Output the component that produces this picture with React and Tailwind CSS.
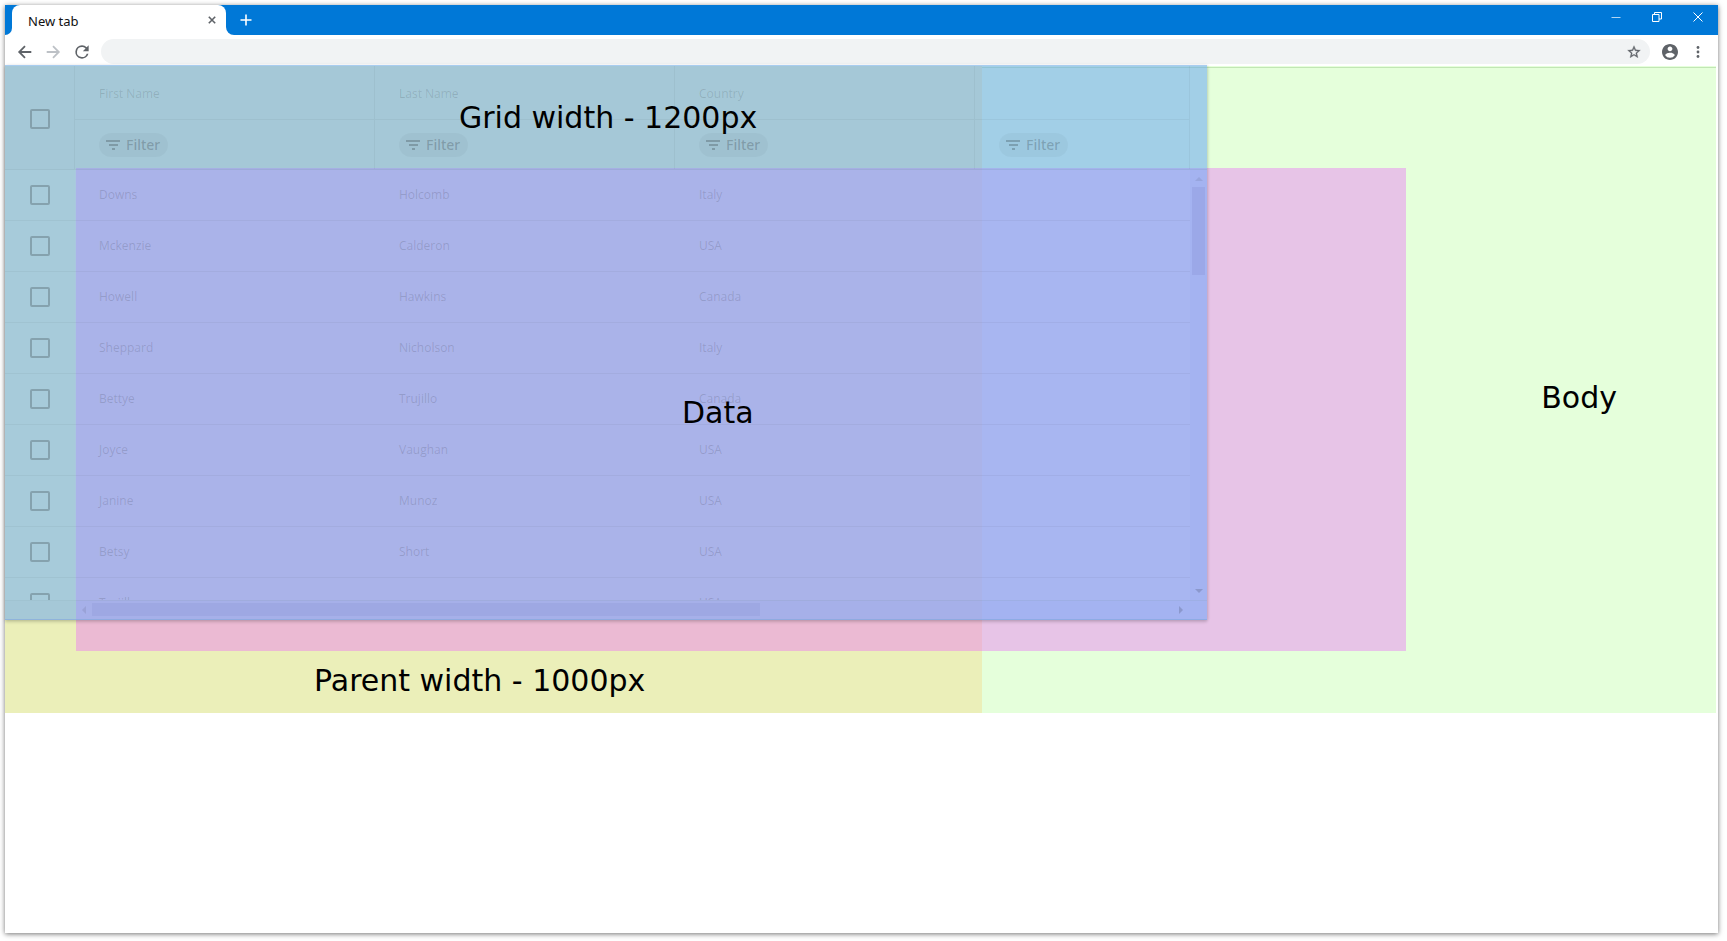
import React from "react";

const columns = ["First Name", "Last Name", "Country", ""];

const people = [
  ["Downs", "Holcomb", "Italy"],
  ["Mckenzie", "Calderon", "USA"],
  ["Howell", "Hawkins", "Canada"],
  ["Sheppard", "Nicholson", "Italy"],
  ["Bettye", "Trujillo", "Canada"],
  ["Joyce", "Vaughan", "USA"],
  ["Janine", "Munoz", "USA"],
  ["Betsy", "Short", "USA"],
  ["Trujillo", "", "USA"],
];

function IconButton({ label, className = "", children }) {
  return (
    <button type="button" aria-label={label} className={`flex items-center justify-center ${className}`}>
      {children}
    </button>
  );
}

function TitleBar() {
  return (
    <div className="flex h-[30px] items-stretch bg-[#0078d7]">
      <div className="w-[7px] bg-white">
        <div className="h-full rounded-br-lg bg-[#0078d7]" />
      </div>
      <div className="flex w-[214px] items-center justify-between bg-[#0078d7]">
        <div className="flex h-full w-full items-center justify-between rounded-t-lg bg-white pl-4 pr-[6px]">
          <span className="pt-[2px] font-['Noto_Sans'] text-[13px] leading-4 text-[#111]">New tab</span>
          <IconButton label="Close tab" className="size-4 text-[#5f6368]">
            <svg width="8" height="8" viewBox="0 0 8 8" stroke="currentColor" strokeWidth="1.6">
              <path d="M.8.8l6.4 6.4M7.200.8L.8 7.200" />
            </svg>
          </IconButton>
        </div>
      </div>
      <div className="flex flex-1 items-stretch bg-white">
        <div className="flex flex-1 items-center rounded-bl-lg bg-[#0078d7]">
          <IconButton label="New tab" className="ml-3 size-4 text-white">
            <svg width="12" height="12" viewBox="0 0 12 12" stroke="currentColor" strokeWidth="1.6">
              <path d="M6 .5v11M.5 6h11" />
            </svg>
          </IconButton>
          <div className="mb-[6px] ml-auto flex items-center gap-[25px] pr-3 text-white">
            <IconButton label="Minimize" className="size-4">
              <svg width="10" height="10" viewBox="0 0 10 10" stroke="currentColor" fill="none" opacity=".7">
                <path d="M.5 5.500h9" />
              </svg>
            </IconButton>
            <IconButton label="Restore" className="size-4">
              <svg width="10" height="10" viewBox="0 0 10 10" stroke="currentColor" fill="none">
                <path d="M.5 2.500h6.500v7H.5zM2.500 2.500v-2h7v6.500h-2.500" />
              </svg>
            </IconButton>
            <IconButton label="Close" className="size-4">
              <svg width="10" height="10" viewBox="0 0 10 10" stroke="currentColor" fill="none">
                <path d="M.5.5l9 9M9.500.5l-9 9" />
              </svg>
            </IconButton>
          </div>
        </div>
      </div>
    </div>
  );
}

function ToolBar() {
  return (
    <div className="flex h-[31px] items-center bg-white pl-3 pr-3 pt-[2px]">
      <IconButton label="Back" className="size-4 text-[#5f6368]">
        <svg width="16" height="16" viewBox="0 0 16 16" stroke="currentColor" strokeWidth="1.8" fill="none">
          <path d="M14.300 8H2.500M8 2.200L2.200 8 8 13.800" />
        </svg>
      </IconButton>
      <IconButton label="Forward" className="ml-3 size-4 text-[#bdc1c6]">
        <svg width="16" height="16" viewBox="0 0 16 16" stroke="currentColor" strokeWidth="1.8" fill="none">
          <path d="M1.700 8h11.800M8 2.200L13.800 8 8 13.800" />
        </svg>
      </IconButton>
      <IconButton label="Reload" className="ml-[11px] size-5 text-[#5f6368]">
        <svg width="20" height="20" viewBox="0 0 24 24" fill="currentColor">
          <path d="M17.650 6.350A7.960 7.960 0 0 0 12 4a8 8 0 1 0 7.730 10h-2.080A6 6 0 1 1 12 6c1.660 0 3.140.69 4.220 1.780L13 11h7V4l-2.350 2.350z" />
        </svg>
      </IconButton>
      <div className="ml-[9px] flex h-[25px] flex-1 items-center rounded-full bg-[#f1f3f4] pr-2">
        <input type="text" aria-label="Address" className="h-full min-w-0 flex-1 bg-transparent px-4 text-sm outline-none" />
        <IconButton label="Bookmark this tab" className="size-4 text-[#5f6368]">
          <svg width="14" height="14" viewBox="1 1 22 22" fill="currentColor" stroke="currentColor" strokeWidth=".5">
            <path d="M22 9.240l-7.190-.62L12 2 9.190 8.630 2 9.240l5.460 4.730L5.820 21 12 17.270 18.180 21l-1.630-7.030L22 9.240zM12 15.400l-3.760 2.270 1-4.280-3.320-2.880 4.380-.38L12 6.100l1.710 4.040 4.380.38-3.320 2.880 1 4.280L12 15.400z" />
          </svg>
        </IconButton>
      </div>
      <IconButton label="Profile" className="ml-3 size-4 text-[#5f6368]">
        <svg width="16" height="16" viewBox="2 2 20 20" fill="currentColor">
          <path d="M12 2C6.480 2 2 6.480 2 12s4.480 10 10 10 10-4.480 10-10S17.520 2 12 2zm0 3c1.660 0 3 1.340 3 3s-1.340 3-3 3-3-1.340-3-3 1.340-3 3-3zm0 14.200a7.200 7.200 0 0 1-6-3.220c.03-1.990 4-3.080 6-3.080 1.990 0 5.970 1.090 6 3.080a7.200 7.200 0 0 1-6 3.220z" />
        </svg>
      </IconButton>
      <IconButton label="Menu" className="ml-3 size-4 text-[#5f6368]">
        <svg width="16" height="16" viewBox="0 0 16 16" fill="currentColor">
          <circle cx="8" cy="3.500" r="1.400" />
          <circle cx="8" cy="8" r="1.400" />
          <circle cx="8" cy="12.500" r="1.400" />
        </svg>
      </IconButton>
    </div>
  );
}

function Tick({ label }) {
  return (
    <input
      type="checkbox"
      aria-label={label}
      className="mx-auto block size-5 appearance-none rounded-[2px] border-2 border-black/20"
    />
  );
}

function FilterChip() {
  return (
    <button
      type="button"
      className="flex h-6 items-center gap-[6px] rounded-full bg-black/3 pl-[7px] pr-2 font-['Noto_Sans'] text-sm font-medium leading-4 text-black/20"
    >
      <svg width="14" height="10" viewBox="0 0 14 10" fill="currentColor">
        <path d="M0 0h14v2H0zM3 4h9v2H3zM6 8h3v2H6z" />
      </svg>
      Filter
    </button>
  );
}

function Arrow({ points, className }) {
  return (
    <svg width="8" height="8" viewBox="0 0 8 8" fill="currentColor" className={className}>
      <polygon points={points} />
    </svg>
  );
}

function DataGrid() {
  return (
    <div className="absolute left-0 right-[509px] top-[-1px] border-b border-[#7fa3dc]/60 bg-[rgb(111,173,246)]/55 shadow-[0_2px_3px_rgba(0,0,0,0.16),1px_0_3px_rgba(0,0,0,0.1)]">
      <div className="flex h-[535px] overflow-hidden border-t border-[#a9cdf0]">
        <div className="flex-1">
          <table className="w-full table-fixed border-separate border-spacing-0 font-['Open_Sans'] text-xs leading-4">
            <colgroup>
              <col className="w-[70px]" />
              <col className="w-[300px]" />
              <col className="w-[300px]" />
              <col className="w-[300px]" />
              <col />
            </colgroup>
            <thead className="bg-black/1">
              <tr className="h-[54px]">
                <th rowSpan={2} className="border-b border-r border-black/4 p-0 pt-[2px]">
                  <Tick label="Select all rows" />
                </th>
                {columns.map((name, i) => (
                  <th key={i} scope="col" className="border-b border-r border-black/4 py-0 pl-6 pt-[3px] text-left font-normal text-black/12">
                    {name}
                  </th>
                ))}
              </tr>
              <tr className="h-[50px]">
                {columns.map((name, i) => (
                  <td key={i} className="border-b border-r border-black/4 py-0 pl-6">
                    <FilterChip />
                  </td>
                ))}
              </tr>
            </thead>
            <tbody>
              {people.map((row, r) => (
                <tr key={r} className="h-[51px]">
                  <td className="border-b border-black/4 p-0">
                    <Tick label={`Select ${row[0]}`} />
                  </td>
                  {[0, 1, 2, 3].map((c) => (
                    <td key={c} className="border-b border-black/4 bg-[#beb4ff]/15 py-0 pl-6 text-black/14">
                      {row[c]}
                    </td>
                  ))}
                </tr>
              ))}
            </tbody>
          </table>
        </div>
        <div className="flex w-[17px] flex-col">
          <div className="h-[104px] border-b border-black/4 bg-black/1" />
          <div className="flex flex-1 flex-col items-center bg-[#a0a0ff]/15 text-black/15">
            <Arrow points="0,6 4,2 8,6" className="mb-1 mt-[5px] opacity-50" />
            <div className="mb-auto h-[88px] w-[13px] bg-[#8c96d8]/35" />
            <Arrow points="0,2 4,6 8,2" className="mb-[5px]" />
          </div>
        </div>
      </div>
      <div className="flex h-[19px] items-stretch border-t border-black/4">
        <div className="w-[71px] bg-black/1" />
        <div className="flex flex-1 items-center bg-[#a0a0ff]/15 pb-px pr-[18px] text-black/15">
          <Arrow points="6,0 2,4 6,8" className="mx-1 opacity-50" />
          <div className="h-[13px] w-[668px] bg-[#8c96d8]/30" />
          <Arrow points="2,0 6,4 2,8" className="ml-auto mr-1" />
        </div>
      </div>
    </div>
  );
}

function Stage() {
  return (
    <main className="relative mr-[2px] h-[647px] bg-[#e5ffdb] font-['DejaVu_Sans'] text-[30px] leading-9 text-black">
      <div className="h-[2px] border-b border-[#c2e6b4]" />
      <div className="absolute bottom-0 left-0 right-[734px] top-0 bg-[#ebefb9]" />
      <div className="absolute bottom-[62px] left-[71px] right-[310px] top-[102px] bg-[rgb(235,107,249)]/40" />
      <DataGrid />
      <p className="absolute left-[454px] top-[34px]">Grid width - 1200px</p>
      <p className="absolute left-[677px] top-[329px]">Data</p>
      <p className="absolute right-[99px] top-[314px]">Body</p>
      <p className="absolute left-[309px] top-[597px]">Parent width - 1000px</p>
    </main>
  );
}

export default function App() {
  return (
    <div className="flex min-h-screen bg-white pb-2 pl-[5px] pr-[9px] pt-[5px]">
      <div className="flex-1 bg-white shadow-[0_1px_5px_rgba(0,0,0,0.55)]">
        <TitleBar />
        <ToolBar />
        <Stage />
      </div>
    </div>
  );
}
